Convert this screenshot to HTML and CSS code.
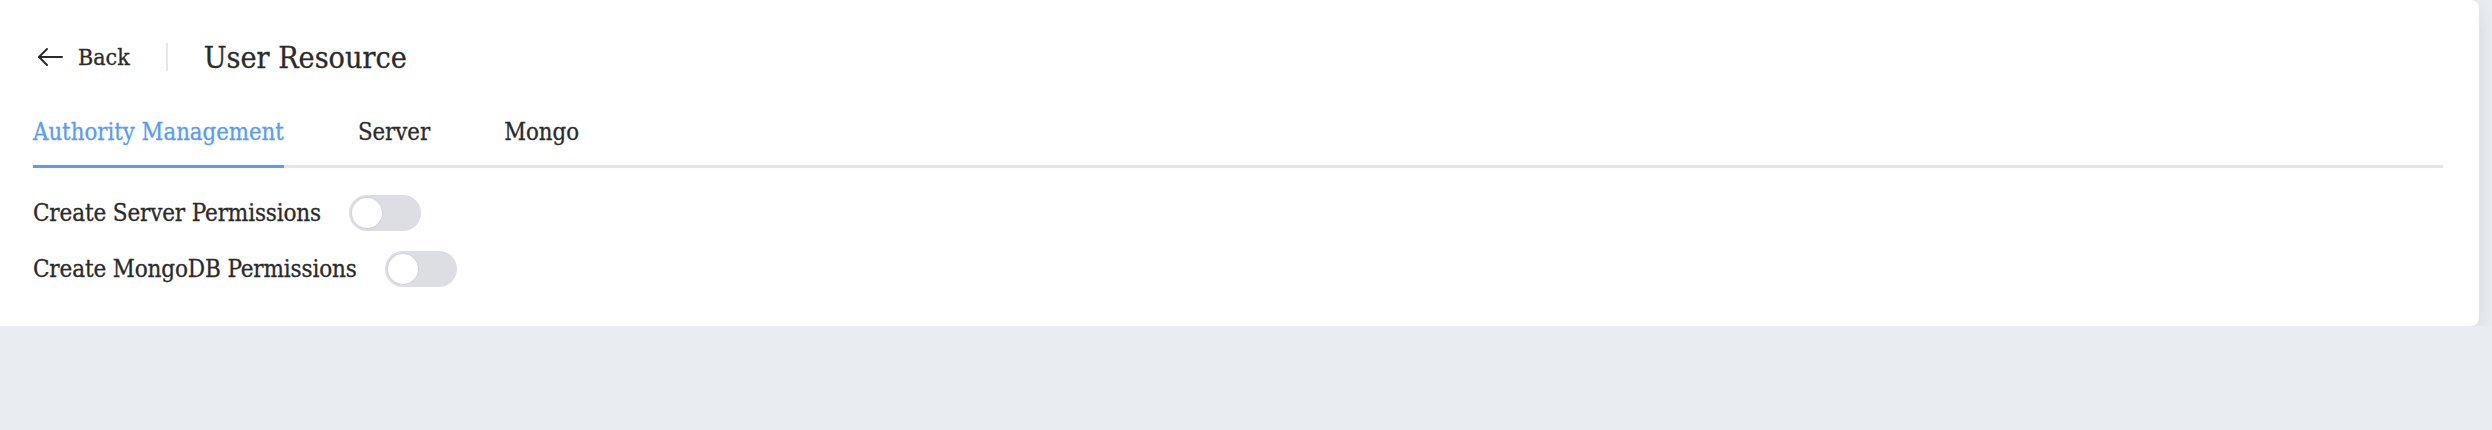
FILE: index.html
```html
<!DOCTYPE html>
<html lang="en">
<head>
  <meta charset="UTF-8" />
  <meta name="viewport" content="width=device-width, initial-scale=1" />
  <title>User Resource</title>
  <link rel="stylesheet" href="styles.css">
</head>
<body>
  <div class="card">
    <header class="page-header">
      <a href="#" class="back">
        <svg class="back-icon" width="26" height="20" viewBox="0 0 26 20" fill="none" stroke="#2b2b2b" stroke-width="2" stroke-linecap="round" stroke-linejoin="round">
          <path d="M25 10H2" />
          <path d="M10 2L2 10l8 8" />
        </svg>
        <span>Back</span>
      </a>
      <span class="divider"></span>
      <h1 class="title">User Resource</h1>
    </header>

    <nav class="tabs">
      <a href="#" class="tab active">Authority Management</a>
      <a href="#" class="tab">Server</a>
      <a href="#" class="tab">Mongo</a>
    </nav>

    <div class="perms">
      <div class="perm-row">
        <span class="perm-label">Create Server Permissions</span>
        <span class="switch"><span class="knob"></span></span>
      </div>
      <div class="perm-row">
        <span class="perm-label">Create MongoDB Permissions</span>
        <span class="switch"><span class="knob"></span></span>
      </div>
    </div>
  </div>
</body>
</html>
```

FILE: styles.css
```css
* {
  box-sizing: border-box;
}

body {
  margin: 0;
  background-color: #e9ecf0;
  font-family: 'DejaVu Serif Condensed', 'DejaVu Serif', serif;
  color: #2b2b2b;
  -webkit-text-stroke: 0.3px currentColor;
}

a {
  text-decoration: none;
  color: inherit;
}

.card {
  margin-right: 13px;
  background: #fff;
  border-radius: 0 8px 8px 0;
  padding: 29px 36px 39px 33px;
  box-shadow: 0 6px 18px rgba(0, 0, 0, 0.09);
}

/* Header */
.page-header {
  display: flex;
  align-items: center;
  height: 56px;
}

.back {
  display: flex;
  align-items: center;
  font-size: 23px;
  padding-left: 4px;
}

.back-icon {
  margin-right: 15px;
}

.divider {
  width: 2px;
  height: 28px;
  background: #e4e6eb;
  margin: 0 36px 0 36px;
}

.title {
  margin: 0;
  font-size: 30.2px;
  font-weight: normal;
}

/* Tabs */
.tabs {
  display: flex;
  gap: 74px;
  margin-top: 31px;
  border-bottom: 3px solid #e4e5ea;
}

.tab {
  font-size: 23.7px;
  line-height: 32px;
  padding-bottom: 17px;
  border-bottom: 3px solid transparent;
  margin-bottom: -3px;
}

.tab.active {
  color: #5a9bf6;
  border-bottom-color: #5a9bf6;
}

/* Permission toggles */
.perms {
  display: flex;
  flex-direction: column;
  gap: 20px;
  margin-top: 27px;
}

.perm-row {
  display: flex;
  align-items: center;
  gap: 28px;
  height: 36px;
  font-size: 24px;
  letter-spacing: -0.15px;
}

.switch {
  width: 72px;
  height: 36px;
  border-radius: 18px;
  background: #dcdee4;
  padding: 3px;
  display: flex;
  align-items: center;
}

.knob {
  width: 30px;
  height: 30px;
  border-radius: 50%;
  background: #fff;
  box-shadow: 0 0 0 1px #d3d5db;
}
```
